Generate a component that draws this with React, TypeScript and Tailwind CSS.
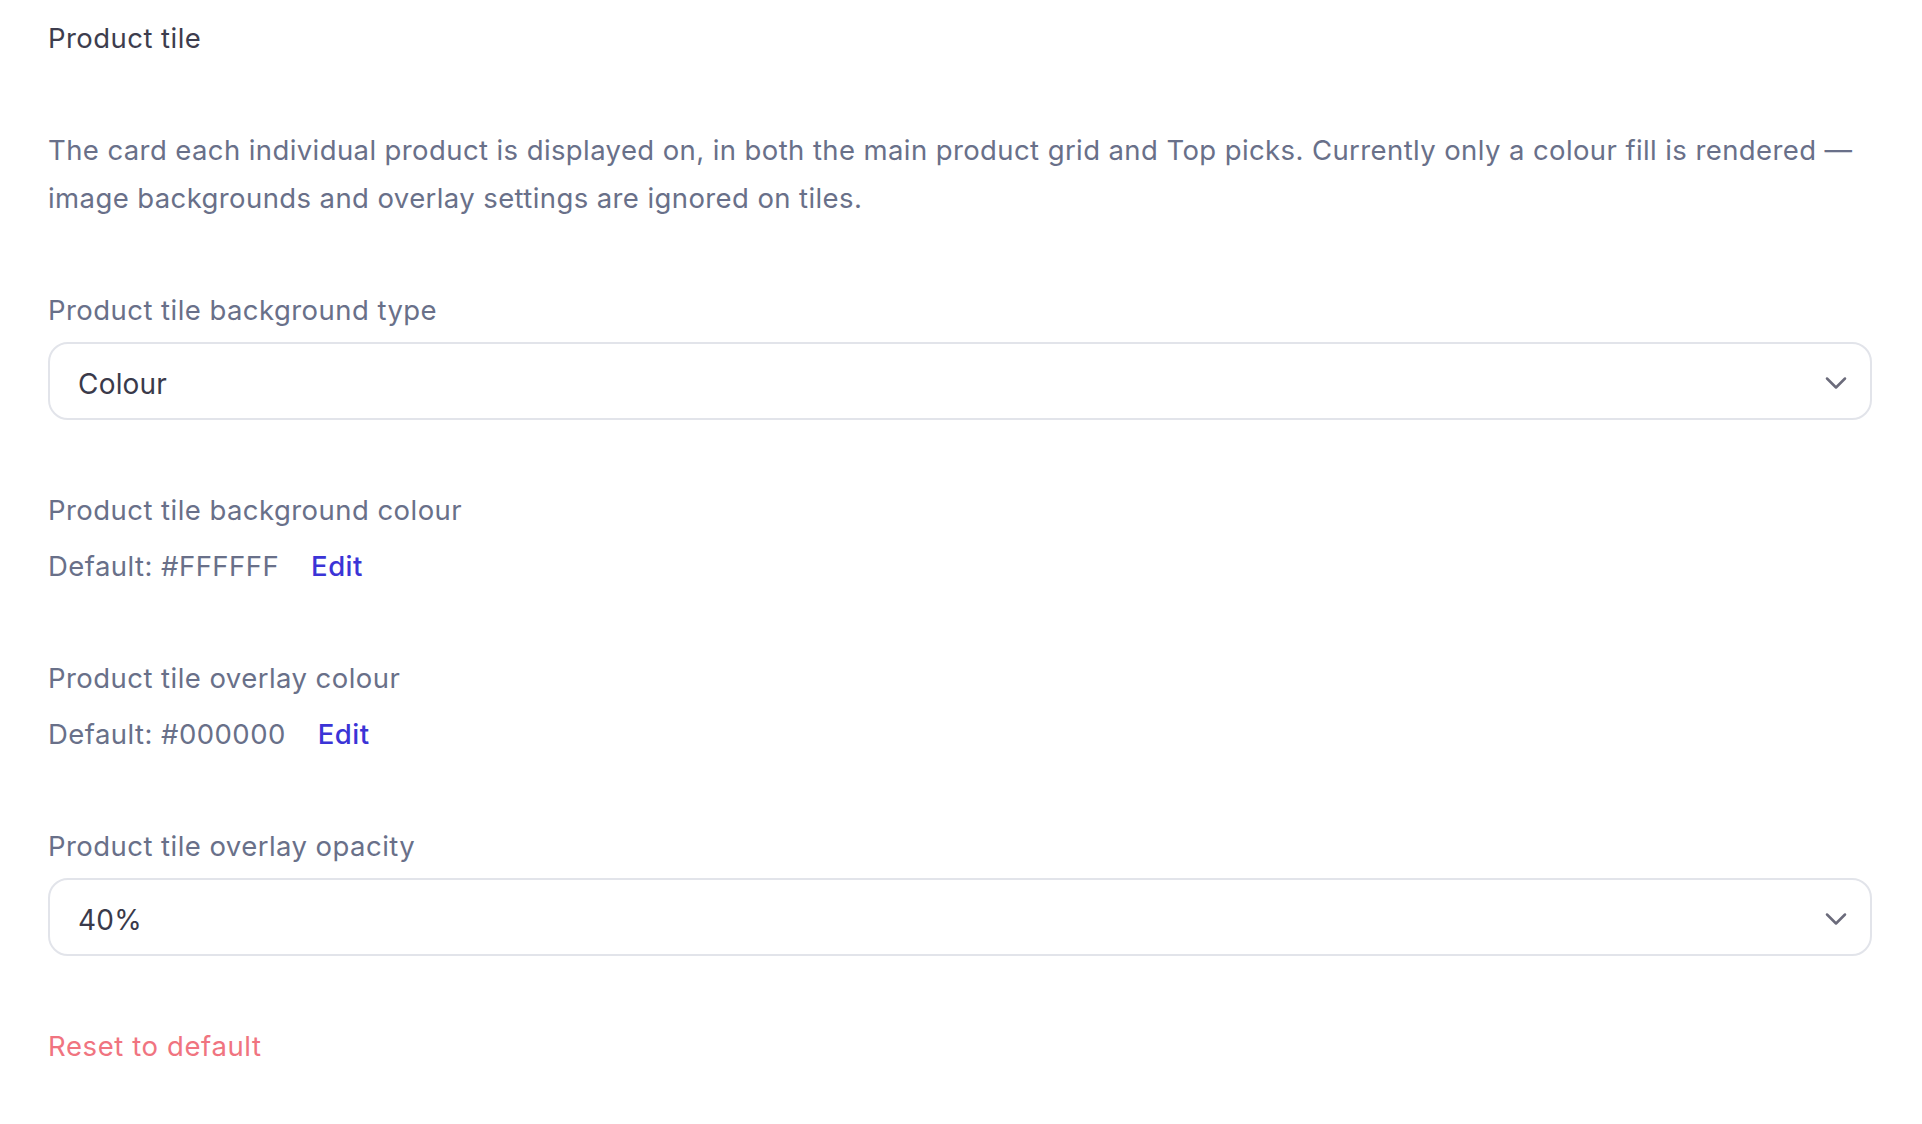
import { ChevronDown } from 'lucide-react'

function Select({ value }: { value: string }) {
  return (
    <div className="mt-3 flex h-[78px] items-center justify-between rounded-[20px] border-2 border-[#e2e4ea] bg-white pl-[28px] pr-[16px]">
      <span className="pt-[6px] text-[28px] tracking-[0.2px] text-[#3a3a4a]">{value}</span>
      <ChevronDown className="mt-[3px] h-9 w-9 text-[#6b6b7b]" strokeWidth={1.7} />
    </div>
  )
}

function ColourRow({ label, value }: { label: string; value: string }) {
  return (
    <div>
      <div className="leading-[40px] text-[#697089]">{label}</div>
      <div className="mt-4 flex items-center gap-8 leading-[40px]">
        <span className="text-[#697089]">Default: {value}</span>
        <button className="font-medium text-[#3b34d6]">Edit</button>
      </div>
    </div>
  )
}

export default function App() {
  return (
    <div
      className="min-h-screen bg-white pl-12 pr-[50px] pt-[18px] text-[27.5px] tracking-[0.45px]"
      style={{ fontFamily: 'Inter, "Noto Sans", sans-serif' }}
    >
      <h1 className="leading-[40px] text-[#3d3d4e]">Product tile</h1>

      <p className="mt-[68px] leading-[48px] tracking-[0.4px] text-[#697089]">
        The card each individual product is displayed on, in both the main product grid and Top picks. Currently only a
        colour fill is rendered — image backgrounds and overlay settings are ignored on tiles.
      </p>

      <div className="mt-[68px]">
        <div className="leading-[40px] text-[#697089]">Product tile background type</div>
        <Select value="Colour" />
      </div>

      <div className="mt-[70px]">
        <ColourRow label="Product tile background colour" value="#FFFFFF" />
      </div>

      <div className="mt-[72px]">
        <ColourRow label="Product tile overlay colour" value="#000000" />
      </div>

      <div className="mt-[72px]">
        <div className="leading-[40px] text-[#697089]">Product tile overlay opacity</div>
        <Select value="40%" />
      </div>

      <button className="mt-[70px] block leading-[40px] tracking-[0.6px] text-[#f07480]">Reset to default</button>
    </div>
  )
}
